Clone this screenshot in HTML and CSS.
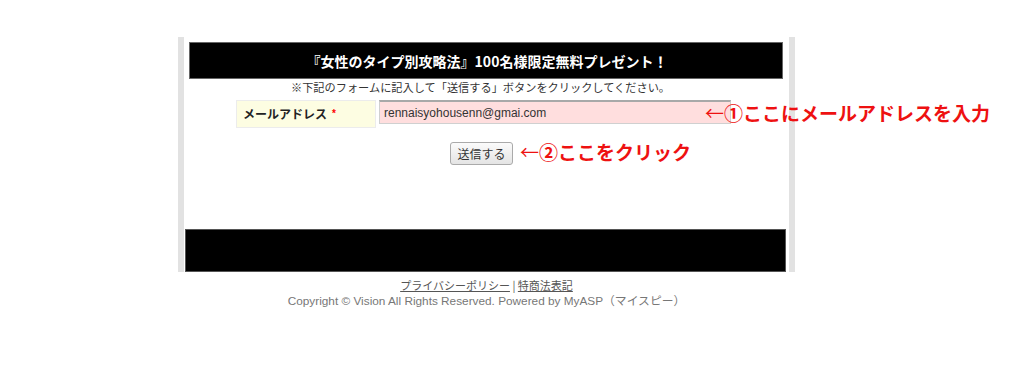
FILE: index.html
```html
<!DOCTYPE html>
<html lang="ja">
<head>
<meta charset="utf-8">
<title>『女性のタイプ別攻略法』100名様限定無料プレゼント！</title>
<link rel="stylesheet" href="styles.css">
</head>
<body>
<div class="page">
  <div class="frame">
    <h1 class="title">『女性のタイプ別攻略法』100名様限定無料プレゼント！</h1>
    <p class="lead">※下記のフォームに記入して「送信する」ボタンをクリックしてください。</p>
    <div class="field-row">
      <label class="field-label" for="mail">メールアドレス<span class="req">*</span></label>
      <input class="field-input" id="mail" type="text" value="rennaisyohousenn@gmai.com">
      <span class="note note-mail"><span class="arrow">←</span><span class="circ">①</span>ここにメールアドレスを入力</span>
    </div>
    <div class="submit-row">
      <button class="submit" type="button">送信する</button>
      <span class="note note-submit"><span class="arrow">←</span><span class="circ">②</span>ここをクリック</span>
    </div>
    <div class="footer-bar"></div>
  </div>
  <div class="links"><a href="#" class="link">プライバシーポリシー</a> | <a href="#" class="link">特商法表記</a></div>
  <div class="copyright">Copyright © Vision All Rights Reserved. Powered by MyASP（マイスピー）</div>
</div>
</body>
</html>
```
FILE: styles.css
```css
html, body {
  margin: 0;
  padding: 0;
  background: #fff;
}
body {
  font-family: "Noto Sans CJK JP", "Noto Sans", sans-serif;
  color: #333;
}
.page {
  width: 973px;
  padding-top: 37px;
}
.frame {
  width: 605px;
  margin: 0 auto;
  border-left: 6px solid #e2e2e2;
  border-right: 6px solid #e2e2e2;
  padding-top: 5px;
  background: #fff;
}
.title {
  margin: 0 6px 0 5px;
  height: 37px;
  box-sizing: border-box;
  border: 1px solid #666;
  background: #000;
  color: #fff;
  font-size: 14px;
  font-weight: bold;
  display: flex;
  align-items: center;
  justify-content: center;
  padding-left: 2px;
}
.lead {
  margin: 0;
  height: 16px;
  line-height: 16px;
  font-size: 11.2px;
  color: #333;
  text-align: center;
  padding-right: 12px;
}
.field-row {
  position: relative;
  margin-top: 5px;
  height: 28px;
  padding-left: 52px;
  display: flex;
  align-items: flex-start;
  gap: 3px;
}
.field-label {
  width: 140px;
  height: 28px;
  box-sizing: border-box;
  background: #fdfde2;
  border: 1px solid #ececec;
  padding-left: 6px;
  font-size: 12px;
  font-weight: bold;
  line-height: 26px;
  color: #222;
}
.req {
  color: #f00;
  font-family: "Liberation Sans", sans-serif;
  font-size: 10px;
  margin-left: 5px;
  vertical-align: 2px;
}
.field-input {
  width: 352px;
  height: 24px;
  box-sizing: border-box;
  margin: 0;
  border: 1px solid #d0d0d0;
  border-top: 2px solid #a8a8a8;
  background: #ffdede;
  padding: 0 4px;
  font-family: "Liberation Sans", sans-serif;
  font-size: 12px;
  color: #333;
  outline: none;
}
.note {
  position: absolute;
  white-space: nowrap;
  color: #ee1111;
  font-weight: bold;
  font-size: 19px;
  line-height: 24px;
}
.arrow {
  font-weight: normal;
}
.circ {
  font-weight: bold;
}
.note-mail {
  left: 521px;
  top: 1px;
}
.submit-row {
  position: relative;
  margin-top: 12px;
  height: 23px;
  text-align: center;
  padding-right: 10px;
}
.note-submit {
  left: 336px;
  top: 0;
}
.submit {
  width: 63px;
  height: 23px;
  box-sizing: border-box;
  margin: 0;
  padding: 0;
  border: 1px solid #aaa;
  border-radius: 3px;
  background: linear-gradient(#fbfbfb, #e4e4e4);
  font-family: "Noto Sans CJK JP", sans-serif;
  font-size: 12px;
  color: #333;
}
.footer-bar {
  margin: 66px 3px 0 1px;
  height: 43px;
  box-sizing: border-box;
  background: #000;
  border: 1px solid #555;
}
.links {
  margin-top: 6px;
  text-align: center;
  font-size: 11px;
  line-height: 14px;
  color: #555;
}
.link {
  color: #555;
  text-decoration: underline;
}
.copyright {
  margin-top: 1px;
  text-align: center;
  font-family: "Liberation Sans", "Noto Sans CJK JP", sans-serif;
  font-size: 11.8px;
  line-height: 16px;
  color: #777;
}
```
